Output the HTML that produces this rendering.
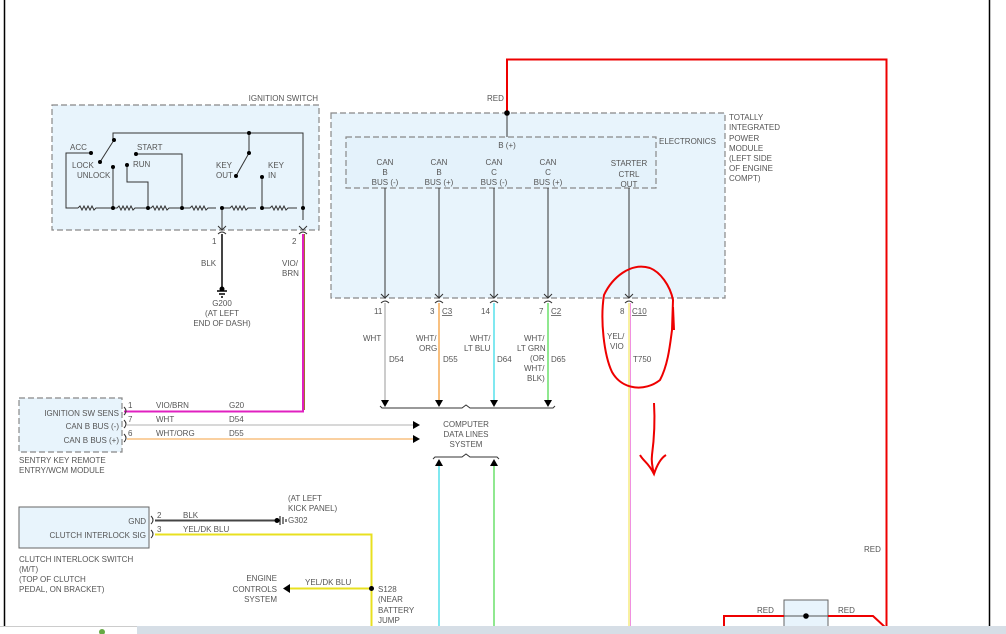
<!DOCTYPE html>
<html><head><meta charset="utf-8"><style>
html,body{margin:0;padding:0;background:#fff;}
svg{display:block;}
text{font-family:"Liberation Sans",sans-serif;font-size:8px;fill:#555;}
</style></head><body>
<svg width="1006" height="634" viewBox="0 0 1006 634" xmlns="http://www.w3.org/2000/svg">
<defs>
<marker id="ad" viewBox="0 0 10 10" refX="5" refY="10" markerWidth="8" markerHeight="8" orient="auto-start-reverse"><path d="M0,0 L10,0 L5,10z" fill="#000"/></marker>
</defs>
<!-- frame lines -->
<line x1="4.5" y1="0" x2="4.5" y2="626" stroke="#000" stroke-width="1.5"/>
<line x1="989.5" y1="0" x2="989.5" y2="626" stroke="#000" stroke-width="1.5"/>

<!-- red power wire -->
<polyline points="507,113 507,59.5 886.5,59.5 886.5,634" fill="none" stroke="#e00" stroke-width="2"/>
<text x="487" y="101">RED</text>
<text x="864" y="552">RED</text>

<!-- ignition switch -->
<rect x="52" y="105" width="267" height="125" fill="#e8f4fc" stroke="#888" stroke-width="1.2" stroke-dasharray="6,3"/>
<text x="318" y="101" text-anchor="end">IGNITION SWITCH</text>
<g stroke="#333" stroke-width="1" fill="none">
<polyline points="113,140 113,133 303,133 303,220"/>
<polyline points="91,153 66,153 66,208 78,208"/>
<path d="M78,208 l2,-2 l2,4 l2,-4 l2,4 l2,-4 l2,4 l2,-4 l2,4 l2,-2 l8,0"/>
<line x1="104" y1="208" x2="113" y2="208"/>
<path d="M113,208 l4,0 l2,-2 l2,4 l2,-4 l2,4 l2,-4 l2,4 l2,-4 l2,4 l2,-2 l11,0"/>
<path d="M148,208 l3,0 l2,-2 l2,4 l2,-4 l2,4 l2,-4 l2,4 l2,-4 l2,4 l2,-2 l11,0"/>
<path d="M182,208 l8,0 l2,-2 l2,4 l2,-4 l2,4 l2,-4 l2,4 l2,-4 l2,4 l2,-2 l8,0"/>
<path d="M222,208 l8,0 l2,-2 l2,4 l2,-4 l2,4 l2,-4 l2,4 l2,-4 l2,4 l2,-2 l8,0"/>
<path d="M262,208 l8,0 l2,-2 l2,4 l2,-4 l2,4 l2,-4 l2,4 l2,-4 l2,4 l2,-2 l9,0"/>
<line x1="100" y1="162" x2="114" y2="140"/>
<line x1="113" y1="167" x2="113" y2="208"/>
<polyline points="127,165 127,182 148,182 148,208"/>
<polyline points="136,154 182,154 182,208"/>
<line x1="249" y1="133" x2="249" y2="153"/>
<line x1="249" y1="153" x2="236" y2="176"/>
<line x1="262" y1="177" x2="262" y2="208"/>
<line x1="222" y1="208" x2="222" y2="230"/>
</g>
<g fill="#000">
<circle cx="91" cy="153" r="2"/><circle cx="100" cy="162" r="2"/><circle cx="114" cy="140" r="2"/>
<circle cx="113" cy="167" r="2"/><circle cx="127" cy="165" r="2"/><circle cx="136" cy="154" r="2"/>
<circle cx="249" cy="133" r="2"/><circle cx="249" cy="153" r="2"/><circle cx="236" cy="176" r="2"/><circle cx="262" cy="177" r="2"/>
<circle cx="113" cy="208" r="2"/><circle cx="148" cy="208" r="2"/><circle cx="182" cy="208" r="2"/><circle cx="222" cy="208" r="2"/><circle cx="262" cy="208" r="2"/><circle cx="303" cy="208" r="2"/>
</g>
<text x="70" y="150">ACC</text><text x="72" y="168">LOCK</text><text x="77" y="178">UNLOCK</text>
<text x="137" y="150">START</text><text x="133" y="167">RUN</text>
<text x="216" y="168">KEY</text><text x="216" y="178">OUT</text>
<text x="268" y="168">KEY</text><text x="268" y="178">IN</text>
<g stroke="#333" fill="none" stroke-width="1">
<path d="M218,226 l4,4 l4,-4 M218,234 q4,-4 8,0"/><path d="M299,226 l4,4 l4,-4 M299,234 q4,-4 8,0"/>
</g>
<text x="212" y="244">1</text><text x="292" y="244">2</text>
<line x1="222" y1="234" x2="222" y2="290" stroke="#444" stroke-width="2"/>
<g stroke="#000" stroke-width="1.5"><line x1="217" y1="291" x2="227" y2="291"/><line x1="219" y1="294" x2="225" y2="294"/><line x1="221" y1="297" x2="223" y2="297"/></g>
<circle cx="222" cy="289" r="2.5" fill="#000"/>
<text x="201" y="266">BLK</text>
<text x="222" y="306" text-anchor="middle">G200</text>
<text x="222" y="316" text-anchor="middle">(AT LEFT</text>
<text x="222" y="326" text-anchor="middle">END OF DASH)</text>
<text x="282" y="266">VIO/</text><text x="282" y="276">BRN</text>
<polyline points="303,234 303,411.5 124,411.5" fill="none" stroke="#e020c0" stroke-width="2"/>
<line x1="304.5" y1="234" x2="304.5" y2="410" stroke="#a07030" stroke-width="1"/>

<!-- TIPM -->
<rect x="331" y="113" width="394" height="185" fill="#e8f4fc" stroke="#888" stroke-width="1.2" stroke-dasharray="6,3"/>
<rect x="346" y="137" width="310" height="51" fill="#e4f2fb" stroke="#888" stroke-width="1.2" stroke-dasharray="6,3"/>
<line x1="507" y1="113" x2="507" y2="137" stroke="#333"/>
<circle cx="507" cy="113" r="2.8" fill="#000"/>
<text x="507" y="148" text-anchor="middle">B (+)</text>
<text x="659" y="144">ELECTRONICS</text>
<text x="729" y="120">TOTALLY</text><text x="729" y="130">INTEGRATED</text><text x="729" y="141">POWER</text><text x="729" y="151">MODULE</text><text x="729" y="161">(LEFT SIDE</text><text x="729" y="171">OF ENGINE</text><text x="729" y="181">COMPT)</text>
<g text-anchor="middle">
<text x="385" y="165">CAN</text><text x="385" y="175">B</text><text x="385" y="185">BUS (-)</text>
<text x="439" y="165">CAN</text><text x="439" y="175">B</text><text x="439" y="185">BUS (+)</text>
<text x="494" y="165">CAN</text><text x="494" y="175">C</text><text x="494" y="185">BUS (-)</text>
<text x="548" y="165">CAN</text><text x="548" y="175">C</text><text x="548" y="185">BUS (+)</text>
<text x="629" y="166">STARTER</text><text x="629" y="177">CTRL</text><text x="629" y="187">OUT</text>
</g>
<g stroke="#333" stroke-width="1" fill="none">
<line x1="385" y1="188" x2="385" y2="298"/><line x1="439" y1="188" x2="439" y2="298"/><line x1="494" y1="188" x2="494" y2="298"/><line x1="548" y1="188" x2="548" y2="298"/><line x1="629" y1="188" x2="629" y2="298"/>
<path d="M381,294 l4,4 l4,-4 M381,303 q4,-4 8,0"/><path d="M435,294 l4,4 l4,-4 M435,303 q4,-4 8,0"/><path d="M490,294 l4,4 l4,-4 M490,303 q4,-4 8,0"/><path d="M544,294 l4,4 l4,-4 M544,303 q4,-4 8,0"/><path d="M625,294 l4,4 l4,-4 M625,303 q4,-4 8,0"/>
</g>
<text x="374" y="314">11</text><text x="430" y="314">3</text><text x="442" y="314" text-decoration="underline">C3</text>
<text x="481" y="314">14</text><text x="539" y="314">7</text><text x="551" y="314" text-decoration="underline">C2</text>
<text x="620" y="314">8</text><text x="632" y="314" text-decoration="underline">C10</text>
<line x1="385" y1="303" x2="385" y2="400" stroke="#ccc" stroke-width="2"/>
<line x1="439" y1="303" x2="439" y2="400" stroke="#f8c080" stroke-width="2"/>
<line x1="494" y1="303" x2="494" y2="400" stroke="#80e8f0" stroke-width="2"/>
<line x1="548" y1="303" x2="548" y2="400" stroke="#90e890" stroke-width="2"/>
<line x1="629" y1="303" x2="629" y2="634" stroke="#f0e040" stroke-width="1"/>
<line x1="630.5" y1="303" x2="630.5" y2="634" stroke="#f090e0" stroke-width="1"/>
<text x="363" y="341">WHT</text><text x="389" y="362">D54</text>
<text x="416" y="341">WHT/</text><text x="419" y="351">ORG</text><text x="443" y="362">D55</text>
<text x="470" y="341">WHT/</text><text x="464" y="351">LT BLU</text><text x="497" y="362">D64</text>
<text x="524" y="341">WHT/</text><text x="517" y="351">LT GRN</text><text x="530" y="361">(OR</text><text x="524" y="371">WHT/</text><text x="527" y="381">BLK)</text><text x="551" y="362">D65</text>
<text x="607" y="339">YEL/</text><text x="610" y="349">VIO</text><text x="633" y="362">T750</text>
<g fill="#000"><path d="M381,400 h8 l-4,7z"/><path d="M435,400 h8 l-4,7z"/><path d="M490,400 h8 l-4,7z"/><path d="M544,400 h8 l-4,7z"/></g>
<path d="M380,406 l2,2 h80 l4,-3 l4,3 h83 l2,-2" fill="none" stroke="#333"/>
<text x="466" y="427" text-anchor="middle">COMPUTER</text><text x="466" y="437" text-anchor="middle">DATA LINES</text><text x="466" y="447" text-anchor="middle">SYSTEM</text>
<path d="M433,459 l2,-2 h27 l4,-3 l4,3 h27 l2,2" fill="none" stroke="#333"/>
<g fill="#000"><path d="M435,466 h8 l-4,-7z"/><path d="M490,466 h8 l-4,-7z"/></g>
<line x1="439" y1="466" x2="439" y2="634" stroke="#80e8f0" stroke-width="2"/>
<line x1="494" y1="466" x2="494" y2="634" stroke="#90e890" stroke-width="2"/>

<!-- Sentry key -->
<rect x="19" y="398" width="103" height="54" fill="#e8f4fc" stroke="#888" stroke-width="1.2" stroke-dasharray="6,3"/>
<text x="119" y="416" text-anchor="end">IGNITION SW SENS</text>
<text x="119" y="429" text-anchor="end">CAN B BUS (-)</text>
<text x="119" y="443" text-anchor="end">CAN B BUS (+)</text>
<text x="19" y="463">SENTRY KEY REMOTE</text><text x="19" y="473">ENTRY/WCM MODULE</text>
<g stroke="#333" fill="none"><path d="M124,407 q4,4 0,8"/><path d="M124,420 q4,4 0,8"/><path d="M124,434 q4,4 0,8"/></g>
<text x="128" y="408">1</text><text x="128" y="422">7</text><text x="128" y="436">6</text>
<text x="156" y="408">VIO/BRN</text><text x="229" y="408">G20</text>
<text x="156" y="422">WHT</text><text x="229" y="422">D54</text>
<text x="156" y="436">WHT/ORG</text><text x="229" y="436">D55</text>
<line x1="127" y1="425" x2="414" y2="425" stroke="#ccc" stroke-width="1.5"/>
<line x1="127" y1="439" x2="414" y2="439" stroke="#f8c080" stroke-width="1.5"/>
<g fill="#000"><path d="M413,421 v8 l7,-4z"/><path d="M413,435 v8 l7,-4z"/></g>

<!-- clutch -->
<rect x="19" y="507" width="130" height="41" fill="#e8f4fc" stroke="#666" stroke-width="1"/>
<text x="146" y="524" text-anchor="end">GND</text>
<text x="146" y="538" text-anchor="end">CLUTCH INTERLOCK SIG</text>
<g stroke="#333" fill="none"><path d="M151,516 q4,4 0,8"/><path d="M151,530 q4,4 0,8"/></g>
<text x="157" y="518">2</text><text x="157" y="532">3</text>
<text x="183" y="518">BLK</text><text x="183" y="532">YEL/DK BLU</text>
<line x1="155" y1="520.5" x2="276" y2="520.5" stroke="#444" stroke-width="2"/>
<circle cx="277" cy="520.5" r="2.5" fill="#000"/>
<g stroke="#000"><line x1="280" y1="516" x2="280" y2="525"/><line x1="283" y1="517" x2="283" y2="524"/><line x1="286" y1="519" x2="286" y2="522"/></g>
<text x="288" y="501">(AT LEFT</text><text x="288" y="511">KICK PANEL)</text><text x="288" y="523">G302</text>
<polyline points="155,534.5 371.5,534.5 371.5,634" fill="none" stroke="#e8e020" stroke-width="2"/>
<line x1="290" y1="588.5" x2="371" y2="588.5" stroke="#e8e020" stroke-width="2"/>
<path d="M290,584 v9 l-7,-4.5z" fill="#000"/>
<circle cx="371.5" cy="588.5" r="2.5" fill="#000"/>
<text x="305" y="585">YEL/DK BLU</text>
<text x="277" y="581" text-anchor="end">ENGINE</text><text x="277" y="592" text-anchor="end">CONTROLS</text><text x="277" y="602" text-anchor="end">SYSTEM</text>
<text x="378" y="592">S128</text><text x="378" y="602">(NEAR</text><text x="378" y="613">BATTERY</text><text x="378" y="623">JUMP</text>
<text x="19" y="562">CLUTCH INTERLOCK SWITCH</text><text x="19" y="572">(M/T)</text><text x="19" y="582">(TOP OF CLUTCH</text><text x="19" y="592">PEDAL, ON BRACKET)</text>

<!-- bottom right -->
<rect x="784" y="600" width="44" height="34" fill="#e8f4fc" stroke="#666"/>
<polyline points="724,634 724,616 784,616" fill="none" stroke="#e00" stroke-width="2"/>
<line x1="784" y1="616" x2="828" y2="616" stroke="#555"/>
<polyline points="828,616 873,616 886,628" fill="none" stroke="#e00" stroke-width="2"/>
<circle cx="806" cy="616" r="2.8" fill="#000"/>
<text x="757" y="613">RED</text><text x="838" y="613">RED</text>

<!-- hand drawn red -->
<path d="M650,268 C630,262 612,278 604,295 C600,320 604,355 612,372 C622,390 645,392 660,380 C668,365 670,345 672,330 L673,300 C670,285 660,272 650,268" fill="none" stroke="#e00" stroke-width="2"/>
<path d="M673,307 L674,330" stroke="#e00" stroke-width="2" fill="none"/>
<path d="M654,403 C655,420 654,440 652,455 C651,462 653,470 654,474 M640,455 C644,462 648,462 654,474 C657,465 661,458 666,455" fill="none" stroke="#e00" stroke-width="2"/>

<!-- bottom bar -->
<rect x="0" y="626" width="1006" height="8" fill="#d6dee6"/>
<rect x="0" y="626" width="137" height="8" fill="#fff"/>
<line x1="0" y1="626.5" x2="137" y2="626.5" stroke="#ccc"/>
<circle cx="102" cy="632" r="3" fill="#6a4"/>
</svg>
</body></html>
